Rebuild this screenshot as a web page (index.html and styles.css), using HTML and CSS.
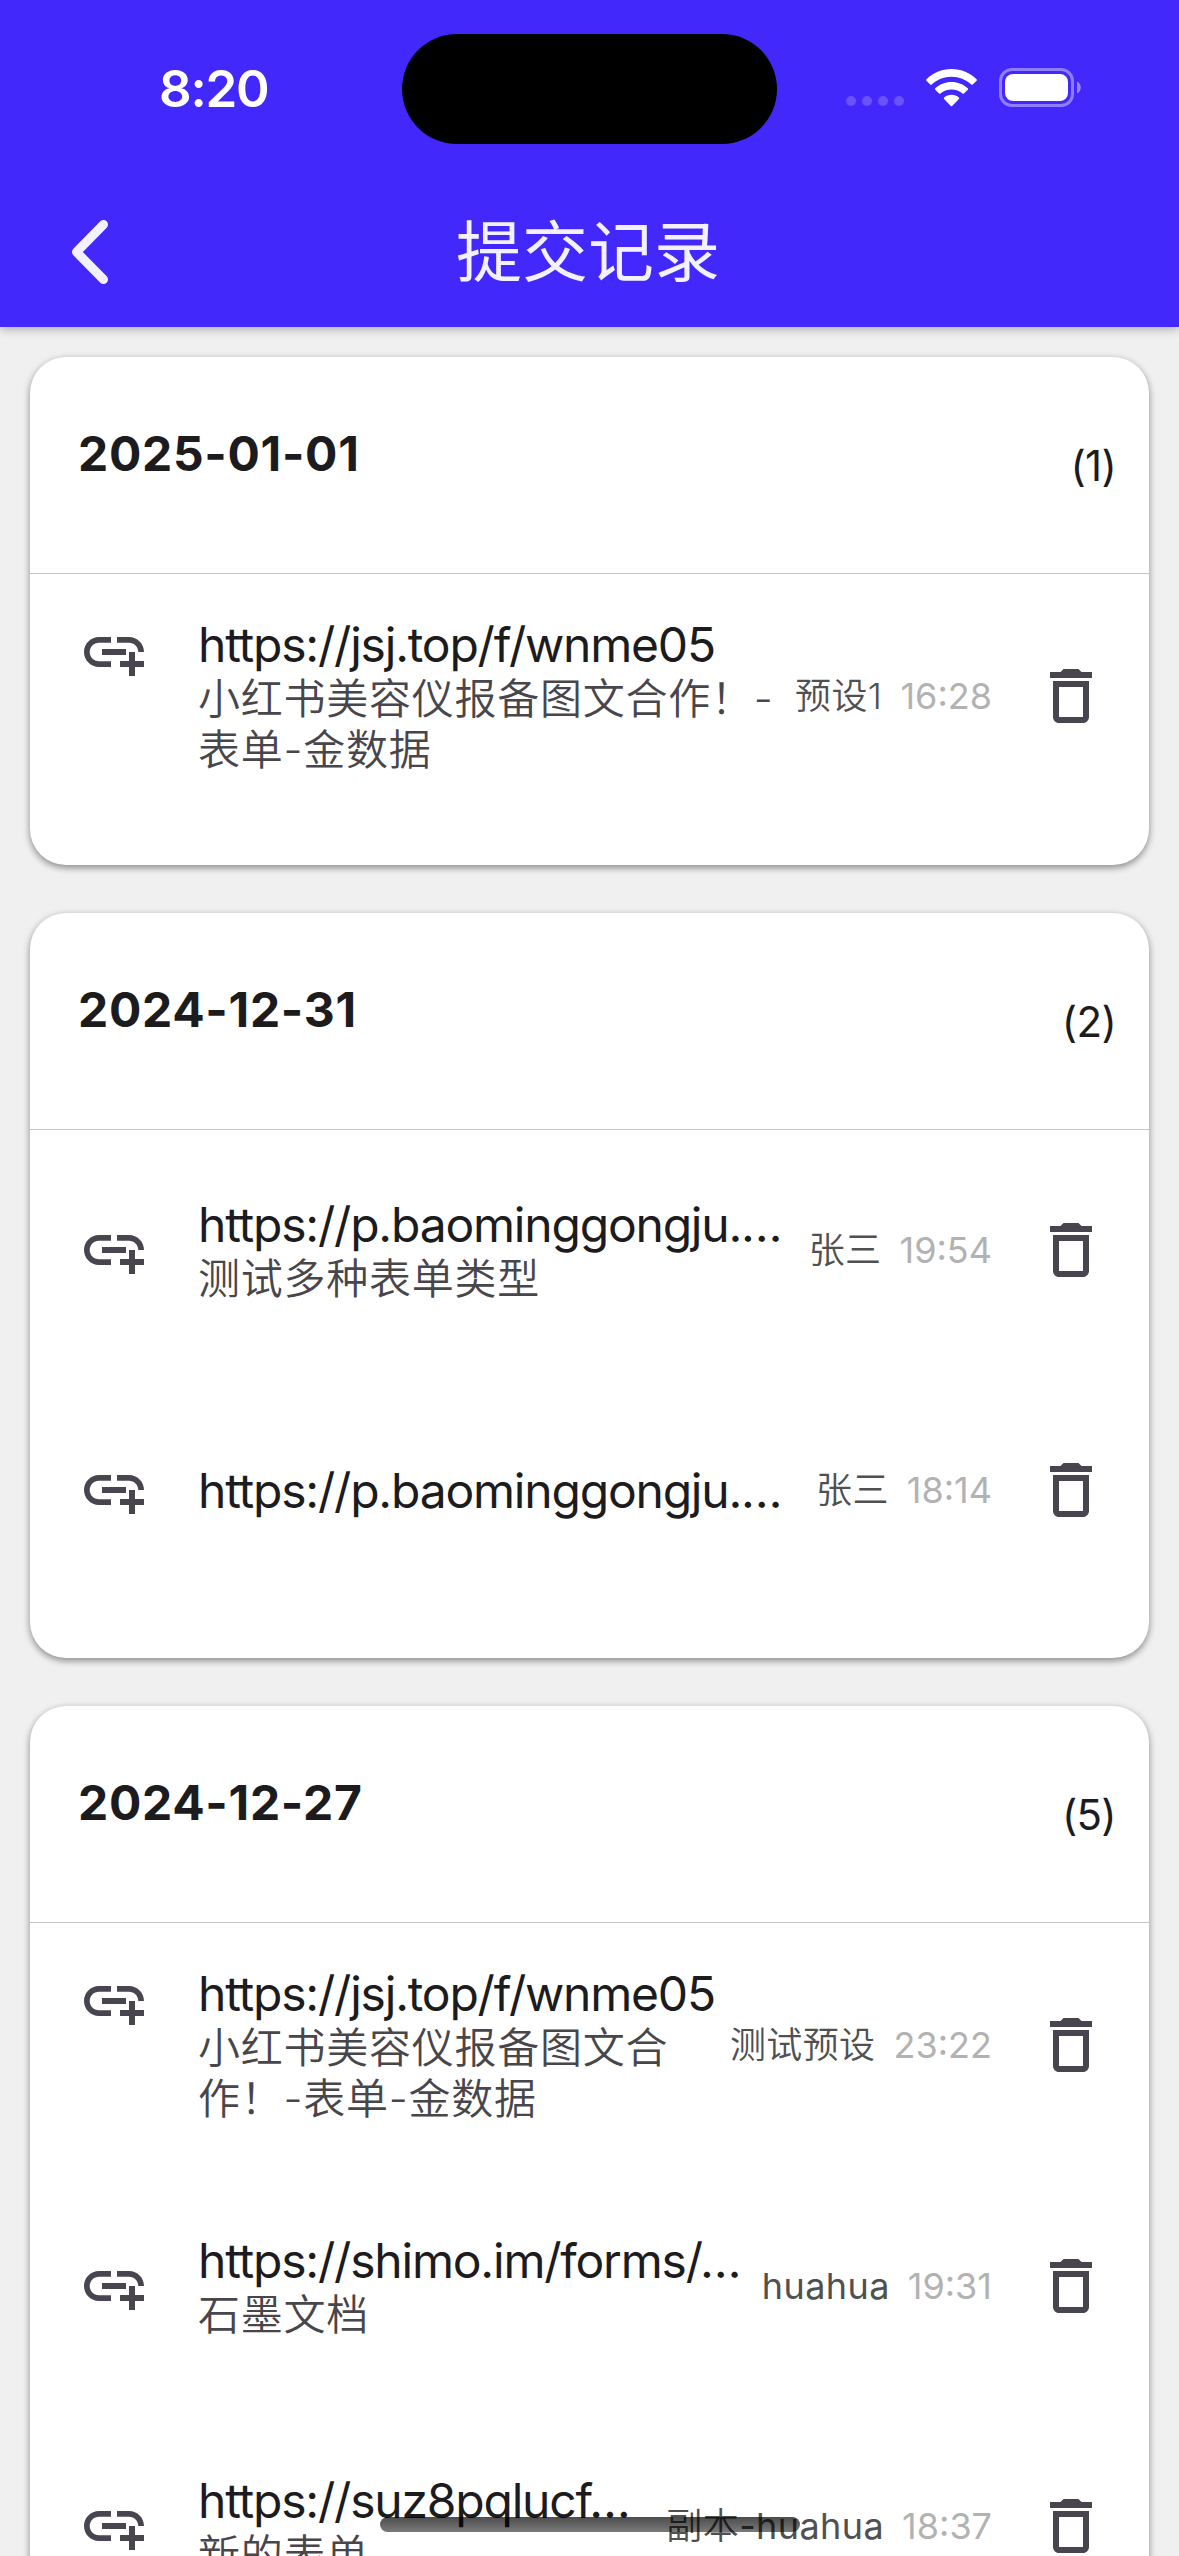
FILE: index.html
```
<!DOCTYPE html>
<html lang="zh-CN">
<head>
  <meta charset="UTF-8">
  <meta name="viewport" content="width=device-width, initial-scale=1.0">
  <title>提交记录</title>
  <link rel="stylesheet" href="styles.css">
</head>
<body>

  <!-- Shared icons -->
  <svg class="icon-defs" width="0" height="0">
    <symbol id="icon-link" viewBox="0 0 24 24">
      <path d="M8 11h8v2H8zM20.1 12H22c0-2.76-2.24-5-5-5h-4v1.9h4c1.71 0 3.1 1.39 3.1 3.1zM3.9 12c0-1.71 1.39-3.1 3.1-3.1h4V7H7c-2.76 0-5 2.24-5 5s2.24 5 5 5h4v-1.9H7c-1.71 0-3.1-1.39-3.1-3.1zM19 12h-2v3h-3v2h3v3h2v-3h3v-2h-3z"/>
    </symbol>
    <symbol id="icon-trash" viewBox="0 0 24 24">
      <path d="M6 19c0 1.1.9 2 2 2h8c1.1 0 2-.9 2-2V7H6zM8 9h8v10H8zM15.5 4l-1-1h-5l-1 1H5v2h14V4z"/>
    </symbol>
  </svg>

  <div class="screen">
    <!-- Header -->
    <header class="header">
      <div class="status-bar">
        <span class="status-time">8:20</span>
        <div class="island"></div>
        <div class="status-icons">
          <svg class="signal" viewBox="0 0 58 10">
            <circle cx="5" cy="5" r="5"/><circle cx="21" cy="5" r="5"/><circle cx="37" cy="5" r="5"/><circle cx="53" cy="5" r="5"/>
          </svg>
          <svg class="wifi" viewBox="0 0 51 38">
            <path d="M25.5 0C35.3 0 44.200 3.800 50.600 10.200Q51.300 11 50.600 11.700L46.700 15.500Q46 16.100 45.300 15.500C40 10.500 33.100 7.700 25.500 7.700S11 10.500 5.700 15.500Q5 16.100 4.300 15.500L.4 11.700Q-.3 11 .4 10.200C6.800 3.800 15.700 0 25.500 0Z"/>
            <path d="M25.500 13C31.800 13 37.500 15.400 41.800 19.300Q42.500 20 41.800 20.700L37.900 24.500Q37.200 25.100 36.500 24.500C33.500 22 29.700 20.500 25.500 20.500S17.500 22 14.500 24.500Q13.800 25.100 13.100 24.500L9.200 20.700Q8.500 20 9.200 19.300C13.500 15.400 19.200 13 25.500 13Z"/>
            <path d="M25.500 25.800C28.300 25.800 30.900 26.800 32.900 28.500Q33.600 29.200 32.900 29.900L26.200 37Q25.500 37.700 24.800 37L18.100 29.900Q17.400 29.200 18.100 28.500C20.100 26.800 22.700 25.800 25.500 25.800Z"/>
          </svg>
          <svg class="battery" viewBox="0 0 83 39">
            <rect class="battery-shell" x="1.500" y="1.500" width="72" height="36" rx="11.500"/>
            <rect x="6" y="6" width="63" height="27" rx="8"/>
            <path class="battery-cap" d="M78 13.500c5 1.800 5 10.200 0 12z"/>
          </svg>
        </div>
      </div>
      <nav class="nav-bar">
        <svg class="back" viewBox="0 0 36 64">
          <path d="M31.500 4.500L4.500 32l27 27.500"/>
        </svg>
        <h1 class="title">提交记录</h1>
      </nav>
    </header>

    <!-- Submission records -->
    <main class="records">
      <section class="card">
        <div class="card-head">
          <span class="date">2025-01-01</span>
          <span class="count">(1)</span>
        </div>
        <div class="row row-tall">
          <svg class="icon link"><use href="#icon-link"/></svg>
          <div class="info">
            <div class="url">https://jsj.top/f/wnme05</div>
            <div class="name">小红书美容仪报备图文合作！-<br>表单-金数据</div>
          </div>
          <div class="meta"><span class="preset">预设1</span><span class="time">16:28</span></div>
          <svg class="icon"><use href="#icon-trash"/></svg>
        </div>
      </section>

      <section class="card">
        <div class="card-head">
          <span class="date">2024-12-31</span>
          <span class="count">(2)</span>
        </div>
        <div class="row">
          <svg class="icon link"><use href="#icon-link"/></svg>
          <div class="info">
            <div class="url">https://p.baominggongju.…</div>
            <div class="name">测试多种表单类型</div>
          </div>
          <div class="meta"><span class="preset">张三</span><span class="time">19:54</span></div>
          <svg class="icon"><use href="#icon-trash"/></svg>
        </div>
        <div class="row">
          <svg class="icon link"><use href="#icon-link"/></svg>
          <div class="info">
            <div class="url">https://p.baominggongju.…</div>
          </div>
          <div class="meta"><span class="preset">张三</span><span class="time">18:14</span></div>
          <svg class="icon"><use href="#icon-trash"/></svg>
        </div>
      </section>

      <section class="card">
        <div class="card-head">
          <span class="date">2024-12-27</span>
          <span class="count">(5)</span>
        </div>
        <div class="row row-tall">
          <svg class="icon link"><use href="#icon-link"/></svg>
          <div class="info">
            <div class="url">https://jsj.top/f/wnme05</div>
            <div class="name">小红书美容仪报备图文合<br>作！-表单-金数据</div>
          </div>
          <div class="meta"><span class="preset">测试预设</span><span class="time">23:22</span></div>
          <svg class="icon"><use href="#icon-trash"/></svg>
        </div>
        <div class="row">
          <svg class="icon link"><use href="#icon-link"/></svg>
          <div class="info">
            <div class="url">https://shimo.im/forms/…</div>
            <div class="name">石墨文档</div>
          </div>
          <div class="meta"><span class="preset latin">huahua</span><span class="time">19:31</span></div>
          <svg class="icon"><use href="#icon-trash"/></svg>
        </div>
        <div class="row">
          <svg class="icon link"><use href="#icon-link"/></svg>
          <div class="info">
            <div class="url">https://suz8pqlucf…</div>
            <div class="name">新的表单</div>
          </div>
          <div class="meta"><span class="preset">副本<span class="latin">-huahua</span></span><span class="time">18:37</span></div>
          <svg class="icon"><use href="#icon-trash"/></svg>
        </div>
      </section>
    </main>

    <div class="home-indicator"></div>
  </div>

</body>
</html>
```
FILE: styles.css
```
* {
  box-sizing: border-box;
}

body {
  margin: 0;
  font-family: Inter, "Noto Sans CJK SC", sans-serif;
  background: #f0f0f0;
  color: #1c1b1d;
}

.icon-defs {
  display: none;
}

.screen {
  position: relative;
  width: 1179px;
  height: 2556px;
  overflow: hidden;
}

/* Header */
.header {
  height: 327px;
  background: #4328fb;
  color: #fff;
  box-shadow: 0 2px 9px rgba(0, 0, 0, 0.3);
}

.status-bar {
  display: grid;
  grid-template-columns: 402px 375px 402px;
  height: 178px;
  padding-top: 34px;
}

.status-time {
  padding-left: 159px;
  font-size: 51px;
  font-weight: 600;
  line-height: 109px;
  letter-spacing: -1.2px;
}

.island {
  height: 110px;
  border-radius: 55px;
  background: #000;
}

.status-icons {
  display: flex;
  align-items: flex-start;
  padding: 34px 0 0 69px;
}

.status-icons svg {
  fill: #fff;
}

.signal {
  width: 58px;
  height: 10px;
  margin: 28px 22px 0 0;
  opacity: 0.2;
}

.wifi {
  width: 51px;
  height: 38px;
  margin: 1px 22px 0 0;
}

.battery {
  width: 83px;
  height: 39px;
}

.status-icons .battery-shell {
  fill: none;
  stroke: #fff;
  stroke-width: 3;
  opacity: 0.4;
}

.battery-cap {
  opacity: 0.45;
}

.nav-bar {
  display: grid;
  grid-template-columns: 108px 1fr 111px;
  align-items: center;
  height: 149px;
  padding-bottom: 1px;
}

.back {
  width: 36px;
  height: 64px;
  margin-left: 72px;
  fill: none;
  stroke: #f3f0ff;
  stroke-width: 9;
  stroke-linecap: round;
  stroke-linejoin: round;
}

.title {
  margin: 0;
  font-size: 66px;
  font-weight: 400;
  line-height: 90px;
  text-align: center;
  color: #f3f0ff;
}

/* Record cards */
.records {
  display: flex;
  flex-direction: column;
  gap: 48px;
  padding: 30px;
}

.card {
  flex: none;
  padding-bottom: 48px;
  border-radius: 36px;
  background: #fff;
  box-shadow: 0 3px 6px rgba(0, 0, 0, 0.3), 0 2px 9px rgba(0, 0, 0, 0.16);
}

.card-head {
  display: flex;
  justify-content: space-between;
  height: 217px;
  padding: 61px 33px 0 48px;
  border-bottom: 1px solid #c4c4c6;
}

.date {
  font-size: 48px;
  font-weight: 700;
  line-height: 72px;
  letter-spacing: 0.7px;
}

.count {
  padding-top: 18px;
  font-size: 42px;
  line-height: 60px;
  letter-spacing: -0.7px;
}

.row {
  display: flex;
  align-items: center;
  height: 240px;
  padding: 0 42px 0 48px;
}

.row-tall {
  height: 243px;
}

.row-tall .link {
  align-self: flex-start;
  margin-top: 42px;
}

.icon {
  flex: none;
  width: 72px;
  height: 72px;
  fill: #49454e;
}

.info {
  flex: 1;
  min-width: 0;
  margin-left: 48px;
  white-space: nowrap;
}

.url {
  font-size: 48px;
  line-height: 57px;
  letter-spacing: -1.2px;
}

.name {
  font-size: 42px;
  font-weight: 350;
  line-height: 51px;
  letter-spacing: 0.75px;
  color: #48464b;
}

.meta {
  display: flex;
  gap: 18px;
  margin-right: 43px;
  font-size: 36px;
  line-height: 48px;
  white-space: nowrap;
}

.preset {
  color: #505050;
  font-weight: 350;
  letter-spacing: 0.4px;
}

.latin {
  font-weight: 400;
}

.time {
  color: #b2b2b2;
}

.home-indicator {
  position: absolute;
  left: 380px;
  top: 2517px;
  width: 420px;
  height: 15px;
  border-radius: 8px;
  background: linear-gradient(rgba(0, 0, 0, 0.7), rgba(0, 0, 0, 0.52));
}
```
